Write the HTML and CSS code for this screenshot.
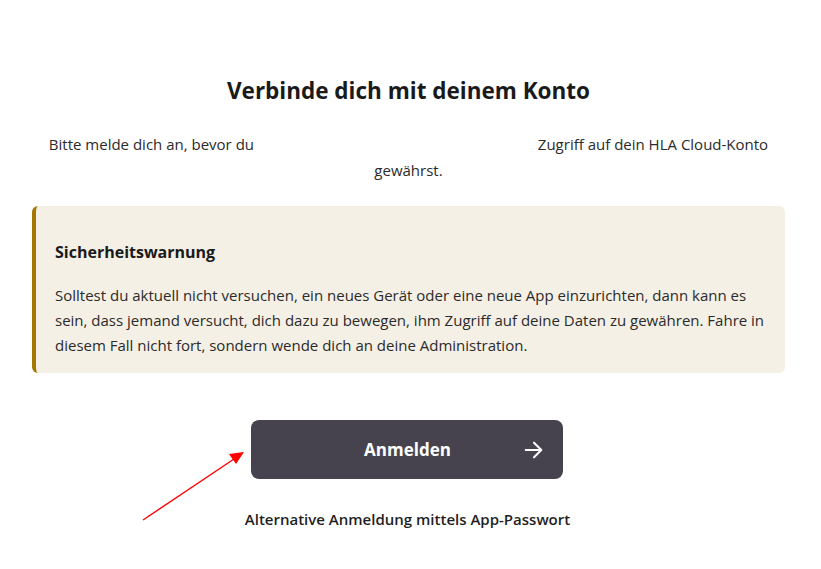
FILE: index.html
```html
<!DOCTYPE html>
<html lang="de">

<head>
    <meta charset="UTF-8">
    <meta name="viewport" content="width=device-width, initial-scale=1.0">
    <title>Verbinde dich mit deinem Konto</title>
    <link rel="stylesheet" href="styles.css">
</head>

<body>
    <div class="login">
        <h2 class="login-title">Verbinde dich mit deinem Konto</h2>
        <p class="login-info">Bitte melde dich an, bevor du <span class="app-name"></span> Zugriff auf dein HLA Cloud-Konto gewährst.</p>

        <div class="warning">
            <h3 class="warning-title">Sicherheitswarnung</h3>
            <p class="warning-text">Solltest du aktuell nicht versuchen, ein neues Gerät oder eine neue App einzurichten, dann kann es sein, dass jemand versucht, dich dazu zu bewegen, ihm Zugriff auf deine Daten zu gewähren. Fahre in diesem Fall nicht fort, sondern wende dich an deine Administration.</p>
        </div>

        <div class="actions">
            <button class="login-btn">
                <span>Anmelden</span>
                <svg class="login-arrow" width="22" height="22" viewBox="0 0 24 24">
                    <path d="M3 12h17M12 4l8 8-8 8" fill="none" stroke="white" stroke-width="2.2" stroke-linecap="round" stroke-linejoin="round" />
                </svg>
            </button>
            <a class="alt-login" href="#">Alternative Anmeldung mittels App-Passwort</a>
        </div>
    </div>

    <!-- annotation -->
    <svg class="pointer" width="821" height="569">
        <line x1="143" y1="520" x2="234" y2="459" stroke="red" stroke-width="1.4" />
        <polygon points="244,452 229,454 236,464" fill="red" />
    </svg>
</body>

</html>
```

FILE: styles.css
```css
* {
    margin: 0;
    padding: 0;
    box-sizing: border-box;
}

body {
    background-color: white;
    font-family: "Open Sans", "Noto Sans", sans-serif;
    color: #222;
}

.login {
    width: 753px;
    margin-left: 32px;
    padding-top: 75px;
    display: flex;
    flex-direction: column;
    align-items: center;
}

.login-title {
    font-size: 22.5px;
    font-weight: 700;
    color: #1a1a1a;
    line-height: 32px;
}

.login-info {
    margin-top: 24px;
    width: 745px;
    font-size: 15px;
    line-height: 26px;
    text-align: center;
    color: #2b2b2b;
}

.app-name {
    display: inline-block;
    width: 276px;
}

.warning {
    margin-top: 23px;
    width: 100%;
    background-color: #f5f0e5;
    border-left: 4px solid #a57700;
    border-radius: 6px;
    padding: 33px 20px 15px 19px;
}

.warning-title {
    font-size: 16px;
    font-weight: 700;
    color: #1a1a1a;
    line-height: 26px;
}

.warning-text {
    margin-top: 18px;
    font-size: 15px;
    line-height: 25px;
    color: #2b2b2b;
}

.actions {
    margin-top: 47px;
    padding-right: 2px;
    display: flex;
    flex-direction: column;
    align-items: center;
    gap: 30px;
}

.login-btn {
    width: 312px;
    height: 59px;
    background-color: #46434f;
    border: none;
    border-radius: 8px;
    color: white;
    font-family: inherit;
    font-size: 17px;
    font-weight: 700;
    position: relative;
    display: flex;
    align-items: center;
    justify-content: center;
}

.login-arrow {
    position: absolute;
    right: 18px;
    top: 19px;
}

.alt-login {
    font-size: 15px;
    font-weight: 600;
    color: #1f1f1f;
    text-decoration: none;
}

.pointer {
    position: absolute;
    left: 0;
    top: 0;
    pointer-events: none;
}
```
